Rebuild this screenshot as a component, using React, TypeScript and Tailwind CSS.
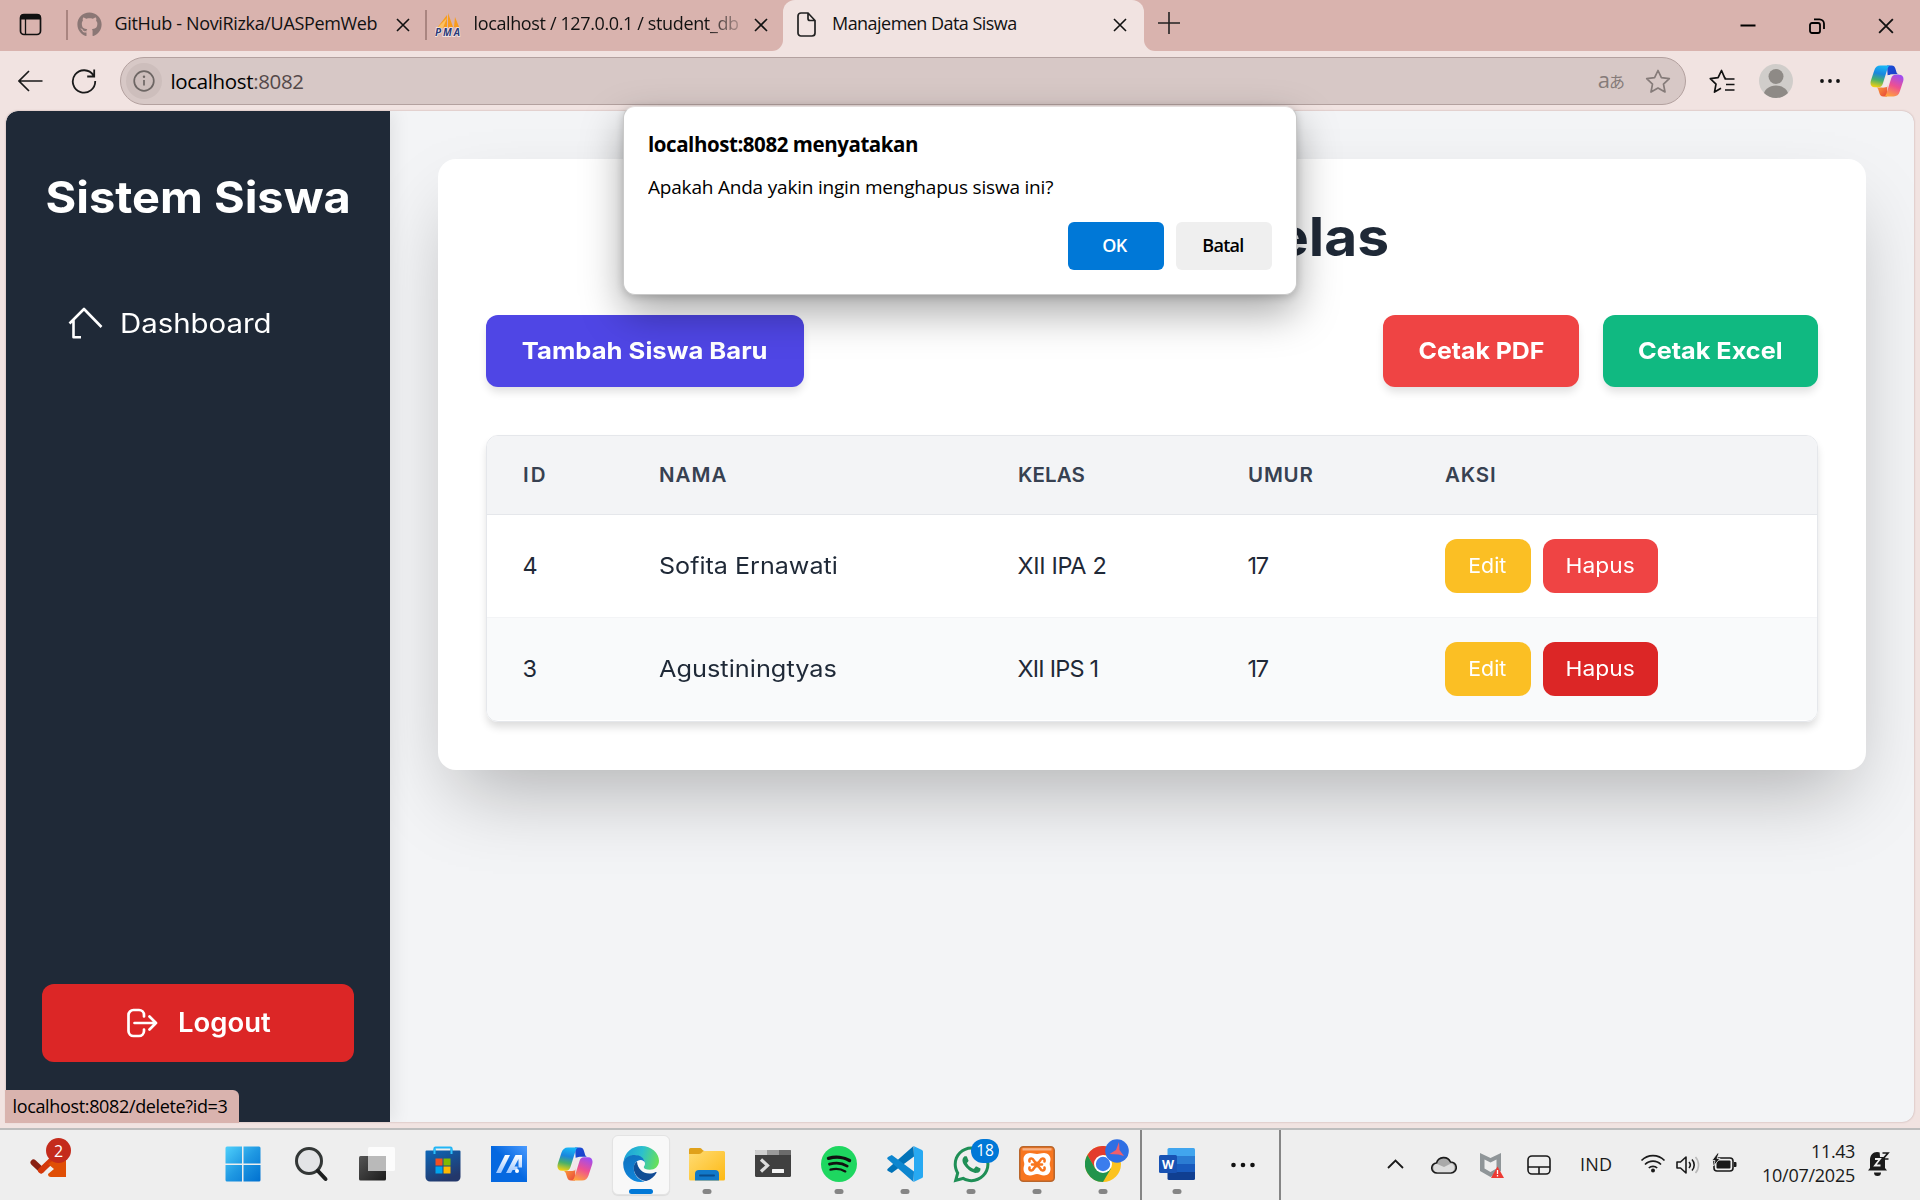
import React from 'react';
import { FaGithub, FaWhatsapp } from 'react-icons/fa';

const UI = "font-['Open_Sans','Noto_Sans',sans-serif]";

function CloseGlyph({ size = 14 }: { size?: number }) {
  return (
    <svg width={size} height={size} viewBox="0 0 14 14" stroke="#111" strokeWidth="1.6" fill="none">
      <path d="M1 1l12 12M13 1L1 13" />
    </svg>
  );
}

function CopilotLogo({ id }: { id: string }) {
  return (
    <svg width="36" height="34" viewBox="0 0 36 34">
      <defs>
        <linearGradient id={id + 'a'} x1="0.4" y1="0" x2="0.2" y2="1">
          <stop offset="0" stopColor="#18b4f5" />
          <stop offset="0.35" stopColor="#1a86dd" />
          <stop offset="0.65" stopColor="#49b06a" />
          <stop offset="1" stopColor="#fdd20a" />
        </linearGradient>
        <linearGradient id={id + 'b'} x1="0.7" y1="0" x2="0.3" y2="1">
          <stop offset="0" stopColor="#a04df0" />
          <stop offset="0.5" stopColor="#ee5091" />
          <stop offset="1" stopColor="#ffa43c" />
        </linearGradient>
        <linearGradient id={id + 'c'} x1="0" y1="0" x2="1" y2="1">
          <stop offset="0" stopColor="#1b4fd8" />
          <stop offset="1" stopColor="#1a3bc4" />
        </linearGradient>
        <linearGradient id={id + 'd'} x1="0" y1="0" x2="1" y2="1">
          <stop offset="0" stopColor="#ffb03a" />
          <stop offset="1" stopColor="#e8443a" />
        </linearGradient>
      </defs>
      <path d="M18 .5h5c2.200 0 3.200 1 3.900 3.200l1.200 4c.5 1.500 1.300 2 2.900 2h-8c-2.500 0-3.500 1.300-4.200 3.600z" fill={`url(#${id}c)`} />
      <path d="M18 33.500h-4c-2.500 0-3.500-1.500-4-3.400l-1.300-4c-.5-1.500-1.400-2.100-3-2.100h8.500c2.300 0 3.400-1.500 4.200-4z" fill={`url(#${id}d)`} />
      <path d="M11 .5h11c-2 0-2.800 1.400-3.500 3.500l-5 16c-.8 2.400-2 3.700-4.500 3.700H5C1 23.700-.3 20.500.9 16.500L4.500 5.500C5.500 2.500 7.500.5 11 .5z" fill={`url(#${id}a)`} />
      <path d="M25 33.500H14c2 0 2.800-1.400 3.500-3.500l5-16c.8-2.400 2-3.700 4.500-3.700h4c4 0 5.300 3.200 4.100 7.200l-3.600 11C30.500 31.500 28.500 33.500 25 33.500z" fill={`url(#${id}b)`} />
      <path d="M19.500 10.500h4.300c-1.300.7-2 1.800-2.600 3.500l-2.600 8.300c-.5 1.200-1.200 1.400-2.400 1.400h-4c1.400-.8 2-2 2.500-3.700l2.300-7.300c.5-1.500 1.200-2.200 2.500-2.200z" fill="#f1e8ea" />
    </svg>
  );
}

function Tabs() {
  return (
    <div className={`flex h-[51px] bg-[#f1e3e1] text-[18px] text-[#111] ${UI}`}>
      <div className="flex w-[783px] items-center rounded-br-[11px] bg-[#d9b3ae] pb-[2px]">
        <svg className="ml-[19px]" width="23" height="23" viewBox="0 0 23 23">
          <rect x="1.500" y="1.500" width="20" height="20" rx="3.500" fill="none" stroke="#111" strokeWidth="1.700" />
          <path d="M1 6.500V4.500A3.500 3.500 0 0 1 4.500 1h14A3.500 3.500 0 0 1 22 4.500v2z" fill="#111" />
          <path d="M6.500 6v15.500" stroke="#111" strokeWidth="1.300" />
        </svg>
        <div className="ml-[24px] h-[30px] w-[2px] bg-[#a98580]" />
        <FaGithub className="ml-[9px] text-[#8b7775]" size={25} />
        <span className="mb-[2px] ml-[12.500px] w-[270px] whitespace-nowrap tracking-[-0.34px]">GitHub - NoviRizka/UASPemWeb</span>
        <div className="ml-[11px]"><CloseGlyph /></div>
        <div className="ml-[15px] h-[30px] w-[2px] bg-[#a98580]" />
        <svg className="ml-[8px]" width="26" height="24" viewBox="0 0 26 24">
          <path d="M2 15L12 2v13zM13 15V0l5 14zM19 14l1-10 4.500 11z" fill="#f89c1c" />
          <path d="M2 15L12 5l-4 10z" fill="#fbc063" />
          <text x="0" y="23" fontSize="10" fontWeight="700" fontStyle="italic" fill="#2b3a78" fontFamily="Open Sans" textLength="25" stroke="#f6e9e8" strokeWidth="1.500" paintOrder="stroke">PMA</text>
        </svg>
        <span className="mb-[2px] ml-[13px] w-[266px] overflow-hidden whitespace-nowrap bg-[linear-gradient(90deg,#111_87%,#1110_103%)] bg-clip-text tracking-[-0.37px] text-transparent">localhost / 127.0.0.1 / student_db</span>
        <div className="ml-[14px]"><CloseGlyph /></div>
      </div>
      <div className="w-[361px] bg-[linear-gradient(#d9b3ae_50%,transparent_50%)]">
        <div className="flex h-full items-center rounded-t-[12px] bg-[#f1e3e1] pb-[2px]">
          <svg className="ml-[14px]" width="19" height="25" viewBox="0 0 19 25" fill="none" stroke="#222" strokeWidth="1.700">
            <path d="M4 1h7l7 7.500V21a3 3 0 0 1-3 3H4a3 3 0 0 1-3-3V4a3 3 0 0 1 3-3zM11 1v5.500a2 2 0 0 0 2 2h5" />
          </svg>
          <span className="mb-[2px] ml-[16px] w-[270px] whitespace-nowrap tracking-[-0.54px]">Manajemen Data Siswa</span>
          <div className="ml-[11px]"><CloseGlyph /></div>
        </div>
      </div>
      <div className="flex flex-1 items-center rounded-bl-[11px] bg-[#d9b3ae]">
        <svg className="mb-[5px] ml-[14px]" width="22" height="22" viewBox="0 0 22 22" stroke="#222" strokeWidth="1.600"><path d="M11 0v22M0 11h22" /></svg>
        <svg className="ml-auto" width="16" height="16" viewBox="0 0 16 16" stroke="#000" strokeWidth="2"><path d="M.5 7.500h15" /></svg>
        <svg className="ml-[53px]" width="16" height="16" viewBox="0 0 16 16" fill="none" stroke="#000" strokeWidth="1.800">
          <rect x="1" y="5" width="10" height="10" rx="2" /><path d="M5 1.300h5.500a4.500 4.500 0 0 1 4.500 4.500V11" />
        </svg>
        <div className="ml-[53px] mr-[26px]"><CloseGlyph size={16} /></div>
      </div>
    </div>
  );
}

function Toolbar() {
  return (
    <div className={`flex h-[60px] items-center bg-[#f1e3e1] ${UI}`}>
      <svg className="mb-[1px] ml-[18px]" width="25" height="22" viewBox="0 0 25 22" fill="none" stroke="#1a1a1a" strokeWidth="1.700"><path d="M24.500 11H1M11 1L1 11l10 10" /></svg>
      <svg className="ml-[28px]" width="26" height="25" viewBox="0 0 26 25" fill="none" stroke="#1a1a1a" strokeWidth="1.800"><path d="M22.500 6.500A11.200 11.200 0 1 0 24.200 12M23.200.5v7h-7" /></svg>
      <div className="ml-[23px] flex h-[48px] w-[1566px] items-center rounded-full border-[1.500px] border-[#b3a19f] bg-[#d7c8c6]">
        <div className="ml-[5px] flex size-[36px] items-center justify-center rounded-full bg-[#cdbebc]">
          <svg width="22" height="22" viewBox="0 0 22 22" fill="none" stroke="#6d6664" strokeWidth="1.700"><circle cx="11" cy="11" r="9.800" /><path d="M11 10v5.500" /><circle cx="11" cy="6.800" r="1.200" fill="#6d6664" stroke="none" /></svg>
        </div>
        <span className="ml-[8.500px] text-[20.500px] tracking-[-0.36px] text-[#000]">localhost<span className="text-[#54494a]">:8082</span></span>
        <div className="ml-auto flex items-center text-[#857b79]">
          <span className="mb-[5px] whitespace-nowrap font-['Open_Sans','Noto_Sans_CJK_JP',sans-serif] text-[22px] leading-none">a<span className="ml-[-1px] text-[16px]">あ</span></span>
          <svg className="ml-[20px] mr-[14px]" width="26" height="25" viewBox="0 0 26 25" fill="none" stroke="#857b79" strokeWidth="1.700" strokeLinejoin="round"><path d="M13 1.500l3.400 7.200 7.900 1-5.800 5.400 1.500 7.900-7-3.900-7 3.900 1.500-7.900-5.800-5.400 7.900-1z" /></svg>
        </div>
      </div>
      <svg className="ml-[23px]" width="26" height="25" viewBox="0 0 26 25" fill="none" stroke="#111" strokeWidth="1.700" strokeLinejoin="round"><path d="M17 9.300l-1.200-.2L12.500 1.500 9.100 8.700l-7.800 1 5.700 5.400-1.500 8 6.500-3.800M15.500 10h10M17 15.500h8.500M16 21h9.500" /></svg>
      <svg className="ml-[24px]" width="34" height="34" viewBox="0 0 34 34"><defs><clipPath id="av"><circle cx="17" cy="17" r="17" /></clipPath></defs><g clipPath="url(#av)"><rect width="34" height="34" fill="#d0cdca" /><circle cx="17" cy="12.500" r="7.500" fill="#8e8a86" /><ellipse cx="17" cy="32" rx="12.500" ry="10.500" fill="#8e8a86" /></g></svg>
      <svg className="ml-[26px]" width="22" height="6" viewBox="0 0 22 6" fill="#111"><circle cx="3" cy="3" r="1.900" /><circle cx="11" cy="3" r="1.900" /><circle cx="19" cy="3" r="1.900" /></svg>
      <div className="ml-[28px] scale-[0.94]"><CopilotLogo id="tb" /></div>
    </div>
  );
}

function Sidebar() {
  return (
    <aside className="z-10 flex w-[384px] shrink-0 flex-col rounded-tl-[12px] bg-[#1f2937] text-white shadow-[4px_0_18px_rgba(0,0,0,0.08)]">
      <h1 className="mt-[59px] origin-left scale-x-[1.067] pl-[37px] text-[44px] font-bold leading-[54px]">Sistem Siswa</h1>
      <a className="ml-[60px] mt-[79px] flex h-[42px] items-center text-[26.500px]">
        <svg className="mb-[2px]" width="38" height="36" viewBox="0 0 38 36" fill="none" stroke="white" strokeWidth="2.600" strokeLinejoin="round"><path d="M3.500 18.500L18 4l17.500 18M7.500 15v17.300h7.500" /></svg>
        <span className="ml-[15.500px] origin-left scale-x-[1.109]">Dashboard</span>
      </a>
      <button className="mx-[36px] mb-[60px] mt-auto flex h-[78px] items-center rounded-[12px] bg-[#dc2626] pl-[83px] text-[26.500px] font-semibold">
        <svg width="34" height="30" viewBox="0 0 34 30" fill="none" stroke="white" strokeWidth="2.700" strokeLinecap="round" strokeLinejoin="round"><path d="M19 8.500V7a5 5 0 0 0-5-5H8.500a5 5 0 0 0-5 5v16a5 5 0 0 0 5 5H14a5 5 0 0 0 5-5v-1.500M9.500 15H31M24.500 8.500L31 15l-6.500 6.500" /></svg>
        <span className="ml-[19px] origin-left scale-x-[1.036]">Logout</span>
      </button>
    </aside>
  );
}

const rows = [
  { id: '4', name: 'Sofita Ernawati', kelas: 'XII IPA 2', umur: '17', row: 'border-t border-[#e5e7eb] bg-white h-[103px]', del: 'bg-[#ef4444]', nt: 'scale-x-[1.068]', kt: 'tracking-[-0.330px]' },
  { id: '3', name: 'Agustiningtyas', kelas: 'XII IPS 1', umur: '17', row: 'border-t border-[#f3f4f6] bg-[#f9fafb] h-[103px]', del: 'bg-[#dc2626]', nt: 'scale-x-[1.078]', kt: 'tracking-[-0.780px]' },
];

function Card() {
  return (
    <section className="mx-[48px] mt-[48px] h-[611px] rounded-[18px] bg-white px-[48px] shadow-[0_37px_75px_-18px_rgba(0,0,0,0.28)]">
      <h2 className="scale-x-[1.055] pt-[45px] text-center text-[54px] font-bold leading-[66px] text-[#1f2937]">Data Siswa Kelas</h2>
      <div className="mt-[45px] flex gap-[24px] text-[23.500px] font-bold text-white">
        <button className="flex h-[72px] w-[318px] items-center justify-center whitespace-nowrap rounded-[12px] bg-[#4f46e5] shadow-[0_6px_9px_-1px_rgba(0,0,0,0.12)]"><span className="scale-x-[1.09]">Tambah Siswa Baru</span></button>
        <button className="ml-auto flex h-[72px] w-[196px] items-center justify-center whitespace-nowrap rounded-[12px] bg-[#ef4444] shadow-[0_6px_9px_-1px_rgba(0,0,0,0.12)]"><span className="scale-x-[1.059]">Cetak PDF</span></button>
        <button className="flex h-[72px] w-[215px] items-center justify-center whitespace-nowrap rounded-[12px] bg-[#10b981] shadow-[0_6px_9px_-1px_rgba(0,0,0,0.12)]"><span className="scale-x-[1.074]">Cetak Excel</span></button>
      </div>
      <div className="mt-[48px] h-[287px] overflow-hidden rounded-[12px] border border-[#e5e7eb] shadow-[0_6px_9px_-1px_rgba(0,0,0,0.14)]">
        <div className="grid h-[78px] grid-cols-[136px_359px_230px_197px_1fr] items-center bg-[#f3f4f6] pl-[36px] text-[20.500px] font-semibold text-[#374151]">
          <span className="tracking-[2px]">ID</span>
          <span className="tracking-[1.040px]">NAMA</span>
          <span className="tracking-[0.090px]">KELAS</span>
          <span className="tracking-[0.810px]">UMUR</span>
          <span className="tracking-[0.850px]">AKSI</span>
        </div>
        {rows.map((r) => (
          <div key={r.id} className={`grid grid-cols-[136px_359px_230px_197px_1fr] items-center pl-[35.500px] text-[23.500px] text-[#1f2937] ${r.row}`}>
            <span>{r.id}</span>
            <span className={`origin-left justify-self-start ${r.nt}`}>{r.name}</span>
            <span className={r.kt}>{r.kelas}</span>
            <span className="tracking-[-1.200px]">{r.umur}</span>
            <span className="flex gap-[12px] text-[20.500px] text-white">
              <button className="flex h-[54px] w-[86px] items-center justify-center rounded-[12px] bg-[#fbbf24]"><span className="scale-x-[1.04]">Edit</span></button>
              <button className={`flex h-[54px] w-[115px] items-center justify-center rounded-[12px] ${r.del}`}><span className="scale-x-[1.109]">Hapus</span></button>
            </span>
          </div>
        ))}
      </div>
    </section>
  );
}

function Dialog() {
  return (
    <div className={`absolute left-[623px] top-[106px] z-30 h-[189px] w-[674px] rounded-[12px] border border-[#c9c9c9] border-t-[#e4dedd] bg-white px-[24px] shadow-[0_18px_42px_rgba(0,0,0,0.34),0_2px_8px_rgba(0,0,0,0.18)] ${UI}`}>
      <div className="mt-[22px] text-[20.500px] font-bold leading-[30px] tracking-[-0.440px] text-black">localhost:8082 menyatakan</div>
      <div className="mt-[13px] h-[26px] overflow-hidden text-[19px] leading-[30px] tracking-[-0.200px] text-black">Apakah Anda yakin ingin menghapus siswa ini?</div>
      <div className="mt-[24px] flex justify-end gap-[12px] text-[18px] font-semibold">
        <button className="h-[48px] w-[96px] rounded-[6px] bg-[#0078d7] pb-px pr-[3px] tracking-[-0.670px] text-white">OK</button>
        <button className="h-[48px] w-[96px] rounded-[6px] bg-[#efefef] pb-px pr-[2px] tracking-[-0.720px] text-black">Batal</button>
      </div>
    </div>
  );
}

const WindowsIcon = () => (
  <svg width="36" height="36" viewBox="0 0 36 36">
    <defs><linearGradient id="wn" x1="0" y1="0" x2="1" y2="1"><stop offset="0" stopColor="#4fd0fb" /><stop offset="0.5" stopColor="#1f98e2" /><stop offset="1" stopColor="#0070d0" /></linearGradient></defs>
    <path d="M2 .5h15v17H.5V2A1.500 1.500 0 0 1 2 .5zM18.500.5H34A1.500 1.500 0 0 1 35.500 2v15.500h-17zM.5 19H17v16.500H2A1.500 1.500 0 0 1 .5 34zM18.500 19h17v15a1.500 1.500 0 0 1-1.500 1.500H18.500z" fill="url(#wn)" />
  </svg>
);
const SearchIcon = () => (
  <svg width="36" height="36" viewBox="0 0 36 36"><circle cx="16" cy="15" r="12.500" fill="#e3e4e6" stroke="#333736" strokeWidth="3" /><path d="M25 25l7.500 8" stroke="#1d1f1f" strokeWidth="4" strokeLinecap="round" /></svg>
);
const TaskViewIcon = () => (
  <svg width="36" height="36" viewBox="0 0 36 36">
    <defs><linearGradient id="tv" x1="0" y1="0" x2="1" y2="1"><stop offset="0" stopColor="#555" /><stop offset="1" stopColor="#1b1b1b" /></linearGradient></defs>
    <rect x="0" y="10" width="27" height="24.500" rx="1.500" fill="url(#tv)" /><rect x="9" y="1" width="27" height="24" rx="1.500" fill="#fdfdfd" fillOpacity="0.900" /><path d="M9 10h18v15H9z" fill="#b9b9b9" />
  </svg>
);
const StoreIcon = () => (
  <svg width="36" height="36" viewBox="0 0 36 36">
    <defs><linearGradient id="st" x1="0" y1="0" x2="0.500" y2="1"><stop offset="0" stopColor="#0d67b8" /><stop offset="1" stopColor="#23376a" /></linearGradient></defs>
    <path d="M9.500 7V2.500A1 1 0 0 1 10.500 1.500h15a1 1 0 0 1 1 1V7" fill="none" stroke="#22b5f5" strokeWidth="2.200" />
    <path d="M1.500 4.500h33a1 1 0 0 1 1 1V31a4.500 4.500 0 0 1-4.500 4.500H5A4.500 4.500 0 0 1 .5 31V5.500a1 1 0 0 1 1-1z" fill="url(#st)" /><path d="M9.500 8V3M26.500 8V3" stroke="#2dc0fa" strokeWidth="2" />
    <path d="M10.500 12.500h7v7h-7z" fill="#f25022" /><path d="M18.500 12.500h7v7h-7z" fill="#7fba00" /><path d="M10.500 20.500h7v7h-7z" fill="#00a4ef" /><path d="M18.500 20.500h7v7h-7z" fill="#ffb900" />
  </svg>
);
const AsusIcon = () => (
  <svg width="36" height="36" viewBox="0 0 36 36">
    <defs><linearGradient id="as" x1="0" y1="1" x2="1" y2="0"><stop offset="0.500" stopColor="#0568e0" /><stop offset="1" stopColor="#4b9bff" /></linearGradient><linearGradient id="as2" x1="0" y1="0" x2="0" y2="1"><stop offset="0" stopColor="#fff" /><stop offset="1" stopColor="#9cc6ff" /></linearGradient></defs>
    <path d="M0 0h36v36H0z" fill="url(#as)" /><path d="M5 27L14 9h5l-9 18zM15 27l9.500-18H31v12.500h-3.500V13L20 27zM21.500 20.500h5V24h-6.800z" fill="url(#as2)" /><circle cx="26" cy="25" r="2" fill="#fff" />
  </svg>
);
const EdgeIcon = () => (
  <svg width="36" height="36" viewBox="0 0 36 36">
    <defs>
      <linearGradient id="e1" x1="0" y1="0.300" x2="1" y2="0.500"><stop offset="0" stopColor="#1d9fd9" /><stop offset="0.500" stopColor="#2cc0cd" /><stop offset="1" stopColor="#68e05a" /></linearGradient>
      <linearGradient id="e2" x1="0.300" y1="0" x2="0.500" y2="1"><stop offset="0" stopColor="#1173c0" /><stop offset="1" stopColor="#0f86dc" /></linearGradient>
      <linearGradient id="e3" x1="0" y1="0" x2="1" y2="1"><stop offset="0" stopColor="#0c4f97" /><stop offset="1" stopColor="#134a94" /></linearGradient>
    </defs>
    <path d="M.5 16C1.500 6.500 9 0 18.500 0 28.500 0 36 7 36 14.800c0 5.700-4.300 9-9.200 9-3.800 0-6-1.300-6-2.600 0-.9 1.200-1.500 1.200-3.700 0-3.300-3.800-8-10.500-8C6 9.500 2 12.500.5 16z" fill="url(#e1)" />
    <path d="M.3 16C2.200 11.500 6.500 9 11.500 9c6 0 10 3.500 10.300 7.500-.8-1.600-2.300-2.500-4-2.500-4.300 0-7 4-7 8.500 0 6.500 5 11.500 11 13-1.200.3-2.500.5-4 .5C7.500 36-.8 27 .3 16z" fill="url(#e2)" />
    <path d="M14 15.500c-2.500 1.800-3.500 4.500-3.300 7.300.5 7 7.300 12.300 12.500 12.200 4.800-1.400 8.200-4.500 10.300-8.300.3-.6-.2-1-.8-.7-2 1-4 1.500-6.300 1.500-6.500 0-11.900-4.500-12.400-12z" fill="url(#e3)" />
  </svg>
);
const ExplorerIcon = () => (
  <svg width="36" height="36" viewBox="0 0 36 36">
    <defs><linearGradient id="ex" x1="0" y1="0" x2="1" y2="1"><stop offset="0" stopColor="#ffdc74" /><stop offset="1" stopColor="#fdb914" /></linearGradient></defs>
    <path d="M0 3.500A1.500 1.500 0 0 1 1.500 2h9.700c1.600 0 2.300 3 4.300 3v4H0z" fill="#e0a11a" /><path d="M0 8h10c3 0 3-3 5-3h19.500A1.500 1.500 0 0 1 36 6.500V33a1.500 1.500 0 0 1-1.500 1.500h-33A1.500 1.500 0 0 1 0 33z" fill="url(#ex)" />
    <path d="M6 34.500V28a4 4 0 0 1 4-4h16a4 4 0 0 1 4 4v6.500z" fill="#1179ca" /><path d="M11 29.500h14" stroke="#0a4d8c" strokeWidth="2" strokeLinecap="round" />
  </svg>
);
const TerminalIcon = () => (
  <svg width="36" height="36" viewBox="0 0 36 36"><rect y="4" width="36" height="27" rx="1.500" fill="#404040" /><path d="M1 4h11v5H0V5a1 1 0 0 1 1-1z" fill="#cfcfcf" /><path d="M12 4h12v5H12z" fill="#9b9b9b" /><path d="M24 4h11a1 1 0 0 1 1 1v4H24z" fill="#6b6b6b" /><path d="M6 13.500l6.500 6-6.500 6" fill="none" stroke="#ddd" strokeWidth="3.200" /><rect x="17" y="23" width="12" height="4" rx="0.500" fill="#f3f3f3" /></svg>
);
const SpotifyIcon = () => (
  <svg width="36" height="36" viewBox="0 0 36 36" fill="none" stroke="#111" strokeLinecap="round"><circle cx="18" cy="18" r="18" fill="#1ed760" stroke="none" /><path d="M7.500 12.300c7-2 15.500-1.200 21 2.200" strokeWidth="3.400" /><path d="M8.500 18.200c6-1.700 13-1 17.700 1.900" strokeWidth="2.800" /><path d="M9.500 23.700c5-1.300 10.500-.8 14.800 1.700" strokeWidth="2.300" /></svg>
);
const VSCodeIcon = () => (
  <svg width="36" height="36" viewBox="0 0 36 36"><path d="M27 10.500L4.800 27 1 25a1.600 1.600 0 0 1 0-2.500L26.500 0z" fill="#0173b8" /><path d="M27 25.500L4.800 9 1 11a1.600 1.600 0 0 0 0 2.500L26.500 36z" fill="#0d86cf" /><path d="M26.500 0L35 4a2 2 0 0 1 1 1.800v24.400A2 2 0 0 1 35 32l-8.500 4c1-.5.500-2 .5-2.500V2.500c0-.5.500-2-.5-2.500z" fill="#27a9f2" /></svg>
);
const XamppIcon = () => (
  <svg width="36" height="36" viewBox="0 0 36 36">
    <rect x="0.800" y="0.800" width="34.400" height="34.400" rx="3.500" fill="#f8761f" stroke="#b9662c" strokeWidth="1.600" />
    <path d="M3.500 2.200h29v2.300h-29z" fill="#f7b286" />
    <path d="M11 7c3 0 4.500 1 7 1s4-1 7-1c3.800 0 6.500 2.800 6.500 6 0 2-.8 3.500-.8 5s.8 3 .8 5c0 3.700-2.700 6.500-6.500 6.500-3 0-4.500-1.500-7-1.500s-4 1.500-7 1.500c-3.800 0-6.500-2.800-6.500-6.500 0-2 .8-3.500.8-5s-.8-3-.8-5C4.500 9.800 7.200 7 11 7z" fill="#fff" />
    <path d="M10.500 15.500c-.5-1.800.4-3 2-3 2.800 0 2 4.500 5.500 4.500s2.700-4.500 5.500-4.500c1.600 0 2.500 1.200 2 3M10.500 21.500c-.5 1.800.4 3 2 3 2.800 0 2-4.500 5.500-4.500s2.700 4.500 5.500 4.500c1.600 0 2.500-1.200 2-3M13 18.500h10" fill="none" stroke="#f8761f" strokeWidth="2.600" strokeLinecap="round" />
  </svg>
);
const ChromeIcon = () => (
  <svg width="36" height="36" viewBox="0 0 36 36"><circle cx="18" cy="18" r="18" fill="#fcc31e" /><path d="M2.400 9A18 18 0 0 1 33.600 9H18L10 22.500z" fill="#e33b2e" /><path d="M2.400 9A18 18 0 0 0 18 36l8-13.500H10.200z" fill="#21944c" /><circle cx="18" cy="18" r="9" fill="#fff" /><circle cx="18" cy="18" r="7.200" fill="#3b7ded" /></svg>
);
const WordIcon = () => (
  <svg width="36" height="36" viewBox="0 0 36 36"><path d="M10 2h24.500A1.500 1.500 0 0 1 36 3.500V10H8.500V3.500A1.500 1.500 0 0 1 10 2z" fill="#41a5ee" /><path d="M8.500 10H36v8H8.500z" fill="#2b7cd3" /><path d="M8.500 18H36v8H8.500z" fill="#185abd" /><path d="M8.500 26H36v6.500a1.500 1.500 0 0 1-1.500 1.500H10a1.500 1.500 0 0 1-1.500-1.500z" fill="#103f91" /><rect y="9" width="18" height="18" rx="1.500" fill="#1852b3" /><text x="9" y="22.500" textAnchor="middle" fontFamily="Open Sans" fontWeight="700" fontSize="12.500" fill="#fff">W</text></svg>
);

function TaskItem({ icon, dot, active, badge }: { icon: React.ReactNode; dot?: boolean; active?: boolean; badge?: React.ReactNode }) {
  return (
    <div className="flex w-[66px] justify-center">
      <div className={`relative flex h-[60px] w-[58px] items-center justify-center rounded-[6px] ${active ? 'border border-[#e3e3e3] bg-[#f8f8f8] shadow-[0_1px_1px_rgba(0,0,0,0.08)]' : ''}`}>
        <div className="mb-[2px]">{icon}</div>
        {dot && <div className="absolute bottom-[1px] left-1/2 h-[5px] w-[9px] -translate-x-1/2 rounded-full bg-[#858585]" />}
        {active && <div className="absolute bottom-0 left-1/2 h-[5px] w-[24px] -translate-x-1/2 rounded-full bg-[#0078d7]" />}
        {badge}
      </div>
    </div>
  );
}

function Taskbar() {
  return (
    <div className={`flex h-[72px] items-center border-t-2 border-[#bdbdbd] bg-[#eeeeee] text-[#1a1a1a] ${UI}`}>
      <div className="relative ml-[30px] h-[36px] w-[42px]">
        <svg className="mt-[5px]" width="38" height="26" viewBox="0 0 38 26"><path d="M3.500 10.500l8 7.500" stroke="#8a1f12" strokeWidth="6" strokeLinecap="round" /><path d="M11 18.500L22 8" stroke="#d4380a" strokeWidth="6" strokeLinecap="round" /><path d="M27 6h9v19H21a3 3 0 0 1-3-3l6-5-6-5z" fill="#e04e05" /></svg>
        <span className="absolute left-[16px] top-[-9px] flex size-[25px] items-center justify-center rounded-full bg-[#c42b1c] text-[16px] text-white">2</span>
      </div>
      <div className="ml-[138px] flex">
        <div className="mr-[2px]"><TaskItem icon={<WindowsIcon />} /></div>
        <TaskItem icon={<SearchIcon />} />
        <TaskItem icon={<TaskViewIcon />} />
        <TaskItem icon={<StoreIcon />} />
        <TaskItem icon={<AsusIcon />} />
        <TaskItem icon={<CopilotLogo id="tk" />} />
        <TaskItem icon={<EdgeIcon />} active />
        <TaskItem icon={<ExplorerIcon />} dot />
        <TaskItem icon={<TerminalIcon />} />
        <TaskItem icon={<SpotifyIcon />} dot />
        <TaskItem icon={<VSCodeIcon />} dot />
        <TaskItem icon={<FaWhatsapp size={41} color="#1f8f56" className="-m-[2.500px]" />} dot badge={<span className="absolute left-[29px] top-[4px] flex h-[24px] w-[28px] items-center justify-center rounded-full bg-[#0078d7] text-[15.500px] text-white">18</span>} />
        <TaskItem icon={<XamppIcon />} dot />
        <TaskItem icon={<ChromeIcon />} dot badge={
          <svg className="absolute left-[31px] top-[4px]" width="24" height="24" viewBox="0 0 24 24"><circle cx="12" cy="12" r="11.800" fill="#2f6fe4" /><path d="M14 3l.5 8 4.500 6-5.500-1.500-9-.5L11 11z" fill="#ef5f6c" /></svg>
        } />
      </div>
      <div className="ml-[4px] h-full w-[2px] bg-[#858585]" />
      <div className="ml-[2px] flex"><TaskItem icon={<WordIcon />} dot /></div>
      <svg className="ml-[20px]" width="26" height="6" viewBox="0 0 26 6" fill="#111"><circle cx="3.500" cy="3" r="2.300" /><circle cx="13" cy="3" r="2.300" /><circle cx="22.500" cy="3" r="2.300" /></svg>
      <div className="ml-[23px] h-full w-[2px] bg-[#858585]" />
      <div className="flex flex-1 items-center pb-px">
        <svg className="mb-[2px] ml-[106px]" width="17" height="10" viewBox="0 0 17 10" fill="none" stroke="#1a1a1a" strokeWidth="1.800"><path d="M1 9l7.500-7.500L16 9" /></svg>
        <svg className="ml-[27px]" width="26" height="18" viewBox="0 0 26 18"><path d="M6 17a5 5 0 0 1-.5-10A7.500 7.500 0 0 1 19.500 6 5.500 5.500 0 0 1 20 17z" fill="#a9a9a9" stroke="#1a1a1a" strokeWidth="1.600" /><path d="M7 16.200a4.300 4.300 0 0 1-1.500-8.400L13 11l7-3.500a4.500 4.500 0 0 1 0 8.700z" fill="#ddd" /></svg>
        <svg className="ml-[23px]" width="24" height="26" viewBox="0 0 24 26"><path d="M0 1l10.500 5L21 1v18l-10.500 6L0 19z" fill="#8f9598" /><path d="M4.500 7.500l6 3 6-3v9l-6 3.500-6-3.500z" fill="#eee" /><path d="M17.500 14.500L24 26H11z" fill="#ee3a33" /><path d="M17.500 18v4M17.500 23v1.500" stroke="#fff" strokeWidth="1.300" /></svg>
        <svg className="ml-[23px]" width="24" height="20" viewBox="0 0 24 20" fill="none" stroke="#1a1a1a" strokeWidth="1.600"><rect x="1" y="1" width="22" height="18" rx="4" /><path d="M1 12h22M12 12v7" /></svg>
        <span className="ml-[29px] text-[18px] tracking-[0.210px]">IND</span>
        <svg className="mb-[3px] ml-[28px]" width="26" height="20" viewBox="0 0 26 20" fill="none" stroke="#1a1a1a" strokeWidth="1.700"><path d="M1.500 7.500a16 16 0 0 1 23 0M5 11.500a11 11 0 0 1 16 0M8.800 15a6 6 0 0 1 8.400 0" /><circle cx="13" cy="17.500" r="2" fill="#1a1a1a" stroke="none" /></svg>
        <svg className="ml-[10px]" width="25" height="20" viewBox="0 0 25 20" fill="none" stroke="#1a1a1a" strokeWidth="1.600" strokeLinejoin="round"><path d="M1 7h3.500L10 2v16l-5.500-5H1zM13 7a4.500 4.500 0 0 1 0 6M16 4.500a8 8 0 0 1 0 11" /><path d="M19.500 2a12 12 0 0 1 0 16" stroke="#b9b9b9" /></svg>
        <svg className="mb-[4px] ml-[11px]" width="25" height="20" viewBox="0 0 25 20"><rect x="2" y="5" width="19" height="13" rx="3" fill="none" stroke="#1a1a1a" strokeWidth="1.600" /><rect x="4.500" y="7.500" width="14" height="8" rx="1" fill="#1a1a1a" /><path d="M22 9h1.500a1 1 0 0 1 1 1v3a1 1 0 0 1-1 1H22z" fill="#1a1a1a" /><path d="M5.500 0L0 7.500h3L1.500 13 8 5.500H5L7 0z" fill="#1a1a1a" stroke="#eee" strokeWidth="0.800" /></svg>
        <div className="mb-[3px] ml-auto text-right text-[18px] leading-[24px]">
          <div className="tracking-[-0.400px]">11.43</div>
          <div className="tracking-[-0.250px]">10/07/2025</div>
        </div>
        <svg className="mb-[2px] ml-[12px] mr-[30px]" width="23" height="25" viewBox="0 0 23 25"><path d="M3 17V9c0-5 3-8 7-8 5 0 8 3 8 8v8l2 2.500H1zM7 21.500h7a3.500 3.500 0 0 1-7 0z" fill="#1a1a1a" /><path d="M8 8h5l-5 6.500h5.500" fill="none" stroke="#eee" strokeWidth="1.800" /><path d="M12.500 0H23v10h-5V6h-5z" fill="#eee" /><path d="M15.500 2h5.500l-5 6h5.500" fill="none" stroke="#1a1a1a" strokeWidth="1.700" /></svg>
      </div>
    </div>
  );
}

export default function App() {
  return (
    <div className="relative flex h-[1200px] w-[1920px] flex-col overflow-hidden bg-[#f1e3e1] font-['Inter',sans-serif]">
      <Tabs />
      <Toolbar />
      <div className="mb-[6px] ml-[6px] mr-[6px] flex flex-1 overflow-hidden rounded-[12px] rounded-bl-none bg-[#f3f4f6] shadow-[0_0_2px_rgba(90,40,40,0.35)]">
        <Sidebar />
        <main className="flex-1">
          <Card />
        </main>
      </div>
      <Taskbar />
      <Dialog />
      <div className={`absolute left-[5px] top-[1090px] z-20 flex h-[33px] w-[234px] items-center rounded-tr-[6px] bg-[#d9b3ae] pl-[7.500px] text-[18px] tracking-[-0.350px] text-black ${UI}`}>localhost:8082/delete?id=3</div>
    </div>
  );
}
